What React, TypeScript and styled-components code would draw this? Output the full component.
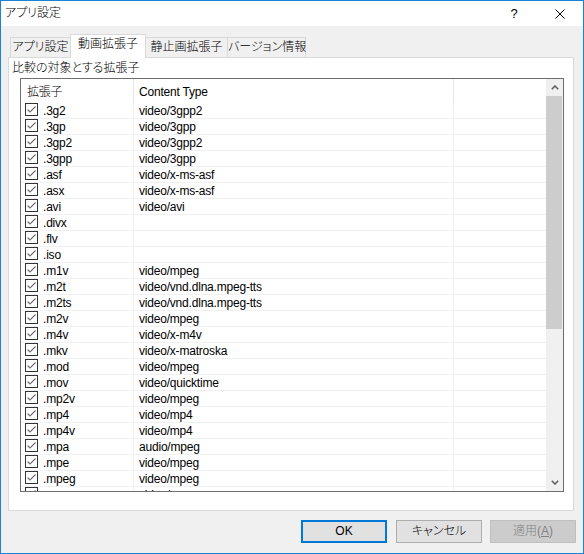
import React from "react";
import styled, { createGlobalStyle } from "styled-components";

const GlobalStyle = createGlobalStyle`
  html, body { margin: 0; padding: 0; background: #ffffff; }
  body {
    font-family: "Liberation Sans", "Noto Sans CJK JP", sans-serif;
    font-size: 12px;
    font-weight: 300;
    color: #000;
    font-feature-settings: "palt";
  }
`;

const Window = styled.div`
  width: 584px;
  height: 554px;
  box-sizing: border-box;
  border: 1px solid #1883d7;
  background: #f0f0f0;
  display: flex;
  flex-direction: column;
  overflow: hidden;
`;

const TitleBar = styled.div`
  height: 25px;
  flex-shrink: 0;
  background: #ffffff;
  display: flex;
  align-items: center;
`;

const Title = styled.div`
  flex: 1;
  padding-left: 4px;
  line-height: 25px;
  font-size: 12px;
`;

const CaptionButton = styled.div`
  width: 46px;
  height: 25px;
  display: flex;
  align-items: center;
  justify-content: center;
  font-family: "Liberation Sans", sans-serif;
  font-size: 13px;
`;

const Body = styled.div`
  flex: 1;
  display: flex;
  flex-direction: column;
  padding: 8px 7px 10px 7px;
`;

const TabStrip = styled.div`
  height: 23px;
  flex-shrink: 0;
  display: flex;
  align-items: flex-end;
  padding-left: 2px;
`;

const Tab = styled.div<{ $active?: boolean; $w: number }>`
  position: relative;
  z-index: ${(p) => (p.$active ? 2 : 1)};
  width: ${(p) => p.$w}px;
  height: ${(p) => (p.$active ? 24 : 20)}px;
  margin-bottom: ${(p) => (p.$active ? -1 : 0)}px;
  margin-left: -1px;
  box-sizing: border-box;
  border: 1px solid #d9d9d9;
  border-bottom: none;
  background: ${(p) => (p.$active ? "#ffffff" : "#f0f0f0")};
  text-align: center;
  line-height: 16px;
  padding-top: 1px;
  white-space: nowrap;
  &:first-child { margin-left: 0; }
`;

const Panel = styled.div`
  height: 454px;
  flex-shrink: 0;
  margin-right: 2px;
  box-sizing: border-box;
  border: 1px solid #d9d9d9;
  background: #ffffff;
  display: flex;
  flex-direction: column;
  padding: 3px 9px 0 11px;
`;

const GroupLabel = styled.div`
  margin-left: -8px;
  line-height: 15px;
`;

const List = styled.div`
  margin-top: 2px;
  height: 414px;
  box-sizing: border-box;
  border: 1px solid #6e6e6e;
  display: flex;
  background: #ffffff;
`;

const ListMain = styled.div`
  flex: 1;
  overflow: hidden;
  display: flex;
  flex-direction: column;
`;

const HeaderRow = styled.div`
  height: 24px;
  flex-shrink: 0;
  display: flex;
`;

const HeaderCell = styled.div<{ $w?: number; $pad: number }>`
  ${(p) => (p.$w ? `width: ${p.$w}px; border-right: 1px solid #e5e5e5;` : "flex: 1;")}
  box-sizing: border-box;
  height: 24px;
  padding-left: ${(p) => p.$pad}px;
  line-height: 27px;
  letter-spacing: -0.2px;
  white-space: nowrap;
`;

const Row = styled.div`
  height: 16px;
  flex-shrink: 0;
  box-sizing: border-box;
  border-bottom: 1px solid #f0f0f0;
  display: flex;
  letter-spacing: -0.2px;
`;

const ExtCell = styled.div`
  width: 113px;
  box-sizing: border-box;
  border-right: 1px solid #f0f0f0;
  padding-left: 4px;
  display: flex;
  align-items: flex-start;
  line-height: 17px;
  white-space: nowrap;
`;

const TypeCell = styled.div<{ $w?: number }>`
  ${(p) => (p.$w ? `width: ${p.$w}px; border-right: 1px solid #f0f0f0;` : "flex: 1;")}
  box-sizing: border-box;
  padding-left: 5px;
  line-height: 17px;
  white-space: nowrap;
`;

const CheckBox = styled.span`
  width: 13px;
  height: 13px;
  box-sizing: border-box;
  border: 1px solid #333333;
  background: #ffffff;
  margin-right: 5px;
  flex-shrink: 0;
  display: flex;
  align-items: center;
  justify-content: center;
`;

const ScrollBar = styled.div`
  width: 17px;
  flex-shrink: 0;
  background: #f0f0f0;
  display: flex;
  flex-direction: column;
`;

const ScrollButton = styled.div`
  height: 17px;
  flex-shrink: 0;
  display: flex;
  align-items: center;
  justify-content: center;
`;

const ScrollTrack = styled.div`
  flex: 1;
  display: flex;
  flex-direction: column;
`;

const Thumb = styled.div`
  height: 233px;
  background: #cdcdcd;
  margin: 0 1px 0 0;
`;

const ButtonRow = styled.div`
  margin-top: 9px;
  height: 23px;
  display: flex;
  justify-content: flex-end;
  gap: 8px;
`;

const DialogButton = styled.button<{ $variant?: "primary" | "disabled" }>`
  width: 86px;
  height: 23px;
  box-sizing: border-box;
  padding: 0;
  font-family: "Liberation Sans", "Noto Sans CJK JP", sans-serif;
  font-feature-settings: "palt";
  font-weight: 300;
  font-size: 12px;
  line-height: 15px;
  background: ${(p) => (p.$variant === "disabled" ? "#cccccc" : "#e1e1e1")};
  color: ${(p) => (p.$variant === "disabled" ? "#838383" : "#000000")};
  border: ${(p) =>
    p.$variant === "primary"
      ? "2px solid #0078d7"
      : p.$variant === "disabled"
      ? "1px solid #bfbfbf"
      : "1px solid #adadad"};
  margin-right: ${(p) => (p.$variant === "primary" ? 1 : 0)}px;
`;

const rows: [string, string][] = [
  [".3g2", "video/3gpp2"],
  [".3gp", "video/3gpp"],
  [".3gp2", "video/3gpp2"],
  [".3gpp", "video/3gpp"],
  [".asf", "video/x-ms-asf"],
  [".asx", "video/x-ms-asf"],
  [".avi", "video/avi"],
  [".divx", ""],
  [".flv", ""],
  [".iso", ""],
  [".m1v", "video/mpeg"],
  [".m2t", "video/vnd.dlna.mpeg-tts"],
  [".m2ts", "video/vnd.dlna.mpeg-tts"],
  [".m2v", "video/mpeg"],
  [".m4v", "video/x-m4v"],
  [".mkv", "video/x-matroska"],
  [".mod", "video/mpeg"],
  [".mov", "video/quicktime"],
  [".mp2v", "video/mpeg"],
  [".mp4", "video/mp4"],
  [".mp4v", "video/mp4"],
  [".mpa", "audio/mpeg"],
  [".mpe", "video/mpeg"],
  [".mpeg", "video/mpeg"],
  [".mpg", "video/mpeg"],
];

const tabs: { label: string; w: number; active?: boolean }[] = [
  { label: "アプリ設定", w: 61 },
  { label: "動画拡張子", w: 76, active: true },
  { label: "静止画拡張子", w: 83 },
  { label: "バージョン情報", w: 79 },
];

const Check = () => (
  <svg width="11" height="11" viewBox="0 0 11 11">
    <polyline points="1.5,5.5 4,8 9.5,2.5" fill="none" stroke="#6d6d6d" strokeWidth="1.1" />
  </svg>
);

const Chevron = ({ down }: { down?: boolean }) => (
  <svg width="8" height="5" viewBox="0 0 8 5">
    <polyline
      points={down ? "0.8,0.8 4,4 7.2,0.8" : "0.8,4.2 4,1 7.2,4.2"}
      fill="none"
      stroke="#606060"
      strokeWidth="1.6"
    />
  </svg>
);

export default function App() {
  return (
    <>
      <GlobalStyle />
      <Window>
        <TitleBar>
          <Title>アプリ設定</Title>
          <CaptionButton>?</CaptionButton>
          <CaptionButton>
            <svg width="10" height="10" viewBox="0 0 10 10">
              <path d="M0.5 0.5 L9.5 9.5 M9.5 0.5 L0.5 9.5" stroke="#000" strokeWidth="1" />
            </svg>
          </CaptionButton>
        </TitleBar>
        <Body>
          <TabStrip>
            {tabs.map((t) => (
              <Tab key={t.label} $w={t.w} $active={t.active}>
                {t.label}
              </Tab>
            ))}
          </TabStrip>
          <Panel>
            <GroupLabel>比較の対象とする拡張子</GroupLabel>
            <List>
              <ListMain>
                <HeaderRow>
                  <HeaderCell $w={113} $pad={6}>拡張子</HeaderCell>
                  <HeaderCell $w={320} $pad={5}>Content Type</HeaderCell>
                  <HeaderCell $pad={5} />
                </HeaderRow>
                {rows.map(([ext, type]) => (
                  <Row key={ext}>
                    <ExtCell>
                      <CheckBox>
                        <Check />
                      </CheckBox>
                      {ext}
                    </ExtCell>
                    <TypeCell $w={320}>{type}</TypeCell>
                    <TypeCell />
                  </Row>
                ))}
              </ListMain>
              <ScrollBar>
                <ScrollButton>
                  <Chevron />
                </ScrollButton>
                <ScrollTrack>
                  <Thumb />
                </ScrollTrack>
                <ScrollButton>
                  <Chevron down />
                </ScrollButton>
              </ScrollBar>
            </List>
          </Panel>
          <ButtonRow>
            <DialogButton $variant="primary">OK</DialogButton>
            <DialogButton>キャンセル</DialogButton>
            <DialogButton $variant="disabled">
              適用(<u>A</u>)
            </DialogButton>
          </ButtonRow>
        </Body>
      </Window>
    </>
  );
}
